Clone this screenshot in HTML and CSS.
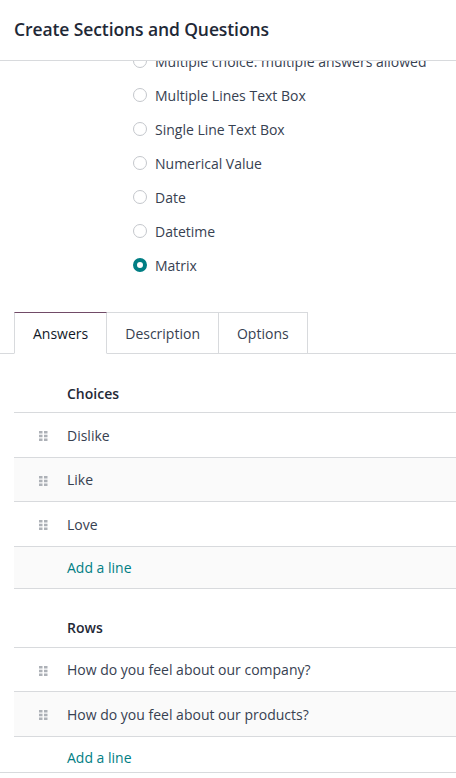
FILE: index.html
```html
<!DOCTYPE html>
<html>
<head>
<meta charset="utf-8">
<link rel="stylesheet" href="styles.css">
</head>
<body>
<div class="modal">
  <header class="modal-header">
    <h4 class="modal-title">Create Sections and Questions</h4>
  </header>
  <main class="modal-body">
    <div class="scroll-inner">
      <ul class="radio-list">
        <li class="radio-item"><span class="radio"></span><span>Multiple choice: multiple answers allowed</span></li>
        <li class="radio-item"><span class="radio"></span><span>Multiple Lines Text Box</span></li>
        <li class="radio-item"><span class="radio"></span><span>Single Line Text Box</span></li>
        <li class="radio-item"><span class="radio"></span><span>Numerical Value</span></li>
        <li class="radio-item"><span class="radio"></span><span>Date</span></li>
        <li class="radio-item"><span class="radio"></span><span>Datetime</span></li>
        <li class="radio-item"><span class="radio checked"></span><span>Matrix</span></li>
      </ul>

      <nav class="tabs">
        <div class="tab active">Answers</div>
        <div class="tab">Description</div>
        <div class="tab">Options</div>
        <div class="tab-fill"></div>
      </nav>

      <section class="list">
        <div class="list-head"><span class="handle-col"></span><span>Choices</span></div>
        <div class="row"><span class="handle-col"><svg class="handle" width="9" height="10" viewBox="0 0 9 10"><rect x="0" y="0" width="3.5" height="2.5"/><rect x="5" y="0" width="3.5" height="2.5"/><rect x="0" y="3.75" width="3.5" height="2.5"/><rect x="5" y="3.75" width="3.5" height="2.5"/><rect x="0" y="7.5" width="3.5" height="2.5"/><rect x="5" y="7.5" width="3.5" height="2.5"/></svg></span><span>Dislike</span></div>
        <div class="row"><span class="handle-col"><svg class="handle" width="9" height="10" viewBox="0 0 9 10"><rect x="0" y="0" width="3.5" height="2.5"/><rect x="5" y="0" width="3.5" height="2.5"/><rect x="0" y="3.75" width="3.5" height="2.5"/><rect x="5" y="3.75" width="3.5" height="2.5"/><rect x="0" y="7.5" width="3.5" height="2.5"/><rect x="5" y="7.5" width="3.5" height="2.5"/></svg></span><span>Like</span></div>
        <div class="row"><span class="handle-col"><svg class="handle" width="9" height="10" viewBox="0 0 9 10"><rect x="0" y="0" width="3.5" height="2.5"/><rect x="5" y="0" width="3.5" height="2.5"/><rect x="0" y="3.75" width="3.5" height="2.5"/><rect x="5" y="3.75" width="3.5" height="2.5"/><rect x="0" y="7.5" width="3.5" height="2.5"/><rect x="5" y="7.5" width="3.5" height="2.5"/></svg></span><span>Love</span></div>
        <div class="row add-row"><span class="handle-col"></span><a class="add-line">Add a line</a></div>
      </section>

      <section class="list">
        <div class="list-head"><span class="handle-col"></span><span>Rows</span></div>
        <div class="row"><span class="handle-col"><svg class="handle" width="9" height="10" viewBox="0 0 9 10"><rect x="0" y="0" width="3.5" height="2.5"/><rect x="5" y="0" width="3.5" height="2.5"/><rect x="0" y="3.75" width="3.5" height="2.5"/><rect x="5" y="3.75" width="3.5" height="2.5"/><rect x="0" y="7.5" width="3.5" height="2.5"/><rect x="5" y="7.5" width="3.5" height="2.5"/></svg></span><span>How do you feel about our company?</span></div>
        <div class="row"><span class="handle-col"><svg class="handle" width="9" height="10" viewBox="0 0 9 10"><rect x="0" y="0" width="3.5" height="2.5"/><rect x="5" y="0" width="3.5" height="2.5"/><rect x="0" y="3.75" width="3.5" height="2.5"/><rect x="5" y="3.75" width="3.5" height="2.5"/><rect x="0" y="7.5" width="3.5" height="2.5"/><rect x="5" y="7.5" width="3.5" height="2.5"/></svg></span><span>How do you feel about our products?</span></div>
        <div class="row add-row"><span class="handle-col"></span><a class="add-line">Add a line</a></div>
      </section>
    </div>
  </main>
  <footer class="modal-footer"></footer>
</div>
</body>
</html>
```

FILE: styles.css
```css
* { box-sizing: border-box; }
html, body { margin: 0; padding: 0; background: #fff; }
body {
  font-family: "Open Sans", "Noto Sans", sans-serif;
  font-size: 14px;
  color: #374151;
}
.modal {
  width: 456px;
  height: 778px;
  display: flex;
  flex-direction: column;
  overflow: hidden;
}
.modal-header {
  height: 61px;
  flex: none;
  border-bottom: 1px solid #d8dadd;
  display: flex;
  align-items: center;
  padding: 0 14px;
  position: relative;
  z-index: 1;
  background: #fff;
}
.modal-title {
  margin: 0 0 3px;
  font-size: 17.5px;
  font-weight: 600;
  color: #1f2937;
  letter-spacing: -0.1px;
}
.modal-body {
  flex: 1;
  overflow: hidden;
}
.scroll-inner {
  margin-top: -17px;
}
.radio-list {
  list-style: none;
  margin: 0;
  padding: 0 0 0 133px;
}
.radio-item {
  height: 34px;
  display: flex;
  align-items: center;
  gap: 8px;
  white-space: nowrap;
  color: #374151;
}
.radio {
  width: 14px;
  height: 14px;
  border-radius: 50%;
  border: 1px solid #c4c7cc;
  background: #fff;
  flex: none;
}
.radio.checked {
  border: 4px solid #017e84;
}
.tabs {
  display: flex;
  margin-top: 30px;
  padding-left: 14px;
  height: 42px;
}
.tab {
  height: 42px;
  padding: 1px 18px 0;
  display: flex;
  align-items: center;
  border: 1px solid #d8dadd;
  border-left: none;
  border-bottom: 1px solid #d8dadd;
  color: #374151;
  font-size: 14px;
}
.tab.active {
  border-left: 1px solid #d8dadd;
  border-top: 1px solid #714b67;
  border-bottom-color: transparent;
  color: #111827;
}
.tab-fill {
  flex: 1;
  border-bottom: 1px solid #d8dadd;
}
.tabs::before {
  content: "";
  width: 14px;
  margin-left: -14px;
  border-bottom: 1px solid #d8dadd;
}
.list {
  margin-left: 14px;
  margin-top: 18px;
}
.list-head {
  height: 41px;
  display: flex;
  align-items: center;
  padding-top: 2px;
  font-weight: 600;
  color: #1f2937;
  border-bottom: 1px solid #d8dadd;
}
.handle-col {
  width: 53px;
  flex: none;
  display: flex;
  align-items: center;
  padding-left: 25px;
}
.handle { fill: #adb1b7; display: block; margin-top: 2px; }
.row {
  height: 44.5px;
  display: flex;
  align-items: center;
  padding-top: 1px;
  border-bottom: 1px solid #d8dadd;
  white-space: nowrap;
}
.row:nth-child(odd) { background: #fafafa; }
.add-row { height: 42px; }
.add-line {
  color: #017e84;
}
.modal-footer {
  height: 6px;
  flex: none;
  border-top: 1px solid #d8dadd;
  background: #fff;
}
```
